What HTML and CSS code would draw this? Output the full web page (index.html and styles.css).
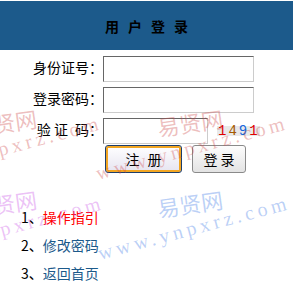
FILE: index.html
```html
<!DOCTYPE html>
<html lang="zh-CN">
  <head>
    <meta charset="UTF-8" />
    <meta name="viewport" content="width=device-width, initial-scale=1.0" />
    <title>用户登录</title>
    <link rel="stylesheet" href="styles.css">
  </head>
  <body>
    <div class="page">
      <div class="header">
        <h1>用户登录</h1>
      </div>

      <form class="login" onsubmit="return false;">
        <div class="fields">
          <label class="label" for="idcard">身份证号：</label>
          <input id="idcard" class="field" type="text" />
          <label class="label" for="pwd">登录密码：</label>
          <input id="pwd" class="field" type="password" />
          <label class="label" for="vcode">验 证&ensp;码：</label>
          <div class="code-row">
            <input id="vcode" class="field short" type="text" />
            <span class="code"><i class="c1">1</i><i class="c2">4</i><i class="c3">9</i><i class="c1">1</i></span>
          </div>
        </div>
        <div class="actions">
          <button class="btn btn-reg" type="button">注册</button>
          <button class="btn" type="submit">登 录</button>
        </div>
      </form>

      <ul class="links">
        <li>1、<a href="#" class="hot">操作指引</a></li>
        <li>2、<a href="#">修改密码</a></li>
        <li>3、<a href="#">返回首页</a></li>
      </ul>

      <!-- watermark over the page -->
      <div class="wm wm-cn pink" style="left: 190px; top: 122px;">易贤网</div>
      <div class="wm wm-url pink" style="left: 192px; top: 148px;">www.ynpxrz.com</div>
      <div class="wm wm-cn pink" style="left: 4px; top: 122px;">易贤网</div>
      <div class="wm wm-url pink" style="left: 6px; top: 148px;">www.ynpxrz.com</div>
      <div class="wm wm-cn blue" style="left: 190px; top: 203px;">易贤网</div>
      <div class="wm wm-url blue" style="left: 194px; top: 228px;">www.ynpxrz.com</div>
      <div class="wm wm-cn violet" style="left: 4px; top: 203px;">易贤网</div>
      <div class="wm wm-url violet" style="left: 8px; top: 228px;">www.ynpxrz.com</div>
    </div>
  </body>
</html>
```

FILE: styles.css
```css
body {
  margin: 0;
  background: #fff;
  font-family: "Noto Sans CJK SC", "Noto Sans", sans-serif;
  font-size: 14px;
  color: #000;
}
.page {
  position: relative;
  width: 294px;
  height: 285px;
  overflow: hidden;
}
.header {
  margin-top: 1px;
  width: 293px;
  height: 49px;
  background: #1c5a8b;
  display: flex;
  align-items: center;
  justify-content: center;
}
.header h1 {
  margin: 0;
  padding-left: 9px;
  font-size: 14px;
  font-weight: bold;
  letter-spacing: 9px;
  line-height: 20px;
}
.login {
  margin-top: 6px;
}
.fields {
  display: grid;
  grid-template-columns: 103px auto;
  row-gap: 5px;
  align-items: center;
}
.label {
  text-align: right;
  line-height: 20px;
  padding-bottom: 4px;
  white-space: nowrap;
}
.field {
  box-sizing: border-box;
  width: 151px;
  height: 26px;
  margin: 0;
  padding: 2px 4px;
  border: 1px solid;
  border-color: #666 #ccc #ccc #666;
  background: #fff;
  font-size: 14px;
}
.field.short {
  width: 105px;
}
.code-row {
  display: flex;
  align-items: center;
}
.code {
  margin-left: 9px;
  margin-bottom: 1px;
  padding: 0 0 0 1px;
  background: #e9e9e9;
  font-family: "Liberation Mono", monospace;
  font-size: 14px;
  line-height: 10px;
  letter-spacing: 2px;
}
.code i {
  font-style: normal;
}
.c1 {
  color: #e00000;
}
.c2 {
  color: #a45a00;
}
.c3 {
  color: #1466dd;
}
.actions {
  display: flex;
  gap: 10px;
  margin-top: 1px;
  padding-left: 105px;
}
.btn {
  box-sizing: border-box;
  height: 28px;
  width: 54px;
  padding: 0;
  border: 1px solid #8a8a8a;
  border-radius: 3px;
  background: linear-gradient(#fdfdfd, #e3e3e3);
  font-family: "Noto Sans CJK SC", sans-serif;
  font-size: 14px;
  color: #000;
  cursor: pointer;
}
.btn-reg {
  width: 77px;
  padding-left: 8px;
  letter-spacing: 8px;
  border-color: #1d3e6b;
  box-shadow: inset 0 0 0 2px #f2a623;
  background: linear-gradient(#ffffff, #e6e4f0);
}
.links {
  list-style: none;
  margin: 30px 0 0;
  padding: 0 0 0 21px;
}
.links li {
  line-height: 28px;
}
.links a {
  color: #1c5a8b;
  text-decoration: none;
}
.links a.hot {
  color: #ff0000;
}
.wm {
  position: absolute;
  white-space: nowrap;
  pointer-events: none;
}
.wm-cn {
  font-size: 22px;
  transform: translate(-50%, -50%) rotate(-8deg);
}
.wm-url {
  font-family: "Liberation Serif", serif;
  font-size: 20px;
  letter-spacing: 4px;
  transform: translate(-50%, -50%) rotate(-15deg);
}
.pink {
  color: rgba(205, 70, 70, 0.35);
}
.blue {
  color: rgba(60, 120, 230, 0.35);
}
.violet {
  color: rgba(200, 80, 230, 0.35);
}
```
